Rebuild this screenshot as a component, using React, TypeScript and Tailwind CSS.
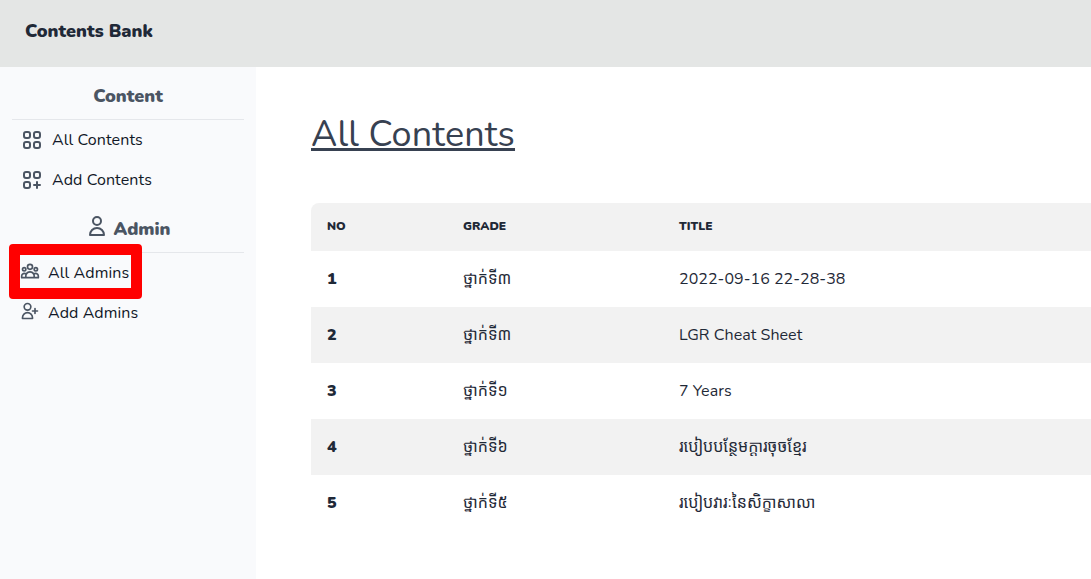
import {
  HiOutlineUser,
  HiOutlineUserAdd,
  HiOutlineUserGroup,
  HiOutlineViewGrid,
  HiOutlineViewGridAdd,
} from "react-icons/hi";

const rows = [
  { grade: "ថ្នាក់ទី៣", title: "2022-09-16 22-28-38" },
  { grade: "ថ្នាក់ទី៣", title: "LGR Cheat Sheet" },
  { grade: "ថ្នាក់ទី១", title: "7 Years" },
  { grade: "ថ្នាក់ទី៦", title: "របៀបបន្ថែមក្ដារចុចខ្មែរ" },
  { grade: "ថ្នាក់ទី៥", title: "របៀបវារៈនៃសិក្ខាសាលា" },
];

function Sidebar() {
  return (
    <aside className="w-64 shrink-0 bg-[#f9fafc] px-3 text-[#111827]">
      <h2 className="flex h-[53px] items-center justify-center border-b border-[#e5e7eb] pt-1.5 text-lg font-black text-[#4b5563]">
        Content
      </h2>
      <nav>
        <a className="flex h-10 items-center gap-2 pl-2">
          <HiOutlineViewGrid className="size-6 text-[#4b5563]" />
          <span className="tracking-[0.08px]">All Contents</span>
        </a>
        <a className="flex h-10 items-center gap-2 pl-2">
          <HiOutlineViewGridAdd className="size-6 text-[#4b5563]" />
          <span className="tracking-[0.08px]">Add Contents</span>
        </a>
      </nav>
      <h2 className="flex h-[53px] items-center justify-center gap-1 border-b border-[#e5e7eb] text-lg font-black text-[#4b5563]">
        <HiOutlineUser className="size-6" />
        <span className="pt-1.5">Admin</span>
      </h2>
      <nav className="relative">
        <a className="flex h-10 items-center gap-2 pl-2">
          <HiOutlineUserGroup className="mb-1 size-5 text-[#4b5563]" />
          <span className="tracking-[0.08px]">All Admins</span>
        </a>
        <a className="flex h-10 items-center gap-2 pl-2">
          <HiOutlineUserAdd className="mb-1 size-5 text-[#4b5563]" />
          <span className="tracking-[0.08px]">Add Admins</span>
        </a>
        <div className="pointer-events-none absolute -left-[3px] -top-[9px] h-[55px] w-[133px] rounded-[4px] border-[11px] border-[#ff0000]" />
      </nav>
    </aside>
  );
}

export default function App() {
  return (
    <div className="flex h-[579px] flex-col overflow-hidden bg-white font-['Nunito','Lato','Noto_Sans_Khmer',sans-serif] text-base text-[#1f2937]">
      <header className="flex h-[67px] shrink-0 items-center bg-[#e4e6e5] px-[25px] pb-1.5">
        <span className="text-lg font-black">Contents Bank</span>
      </header>
      <div className="flex flex-1">
        <Sidebar />
        <main className="min-w-0 flex-1 pl-[55px] pt-12">
          <h1 className="h-[88px] text-4xl tracking-[0.15px] text-[#374151] underline">
            All Contents
          </h1>
          <table className="w-[800px] table-fixed text-left">
            <thead>
              <tr className="h-12 bg-[#f2f2f2] text-xs">
                <th className="w-[136px] rounded-tl-lg pb-0.5 pl-4 font-black">NO</th>
                <th className="w-[216px] pb-0.5 pl-4 font-black">GRADE</th>
                <th className="pb-0.5 pl-4 font-black">TITLE</th>
              </tr>
            </thead>
            <tbody>
              {rows.map((row, i) => (
                <tr key={i} className="h-14 even:bg-[#f2f2f2]">
                  <th className="pl-4 font-black">{i + 1}</th>
                  <td className="pl-4">{row.grade}</td>
                  <td className={i < 3 ? "pl-4 tracking-[0.04px]" : "pl-4"}>{row.title}</td>
                </tr>
              ))}
            </tbody>
          </table>
        </main>
      </div>
    </div>
  );
}
